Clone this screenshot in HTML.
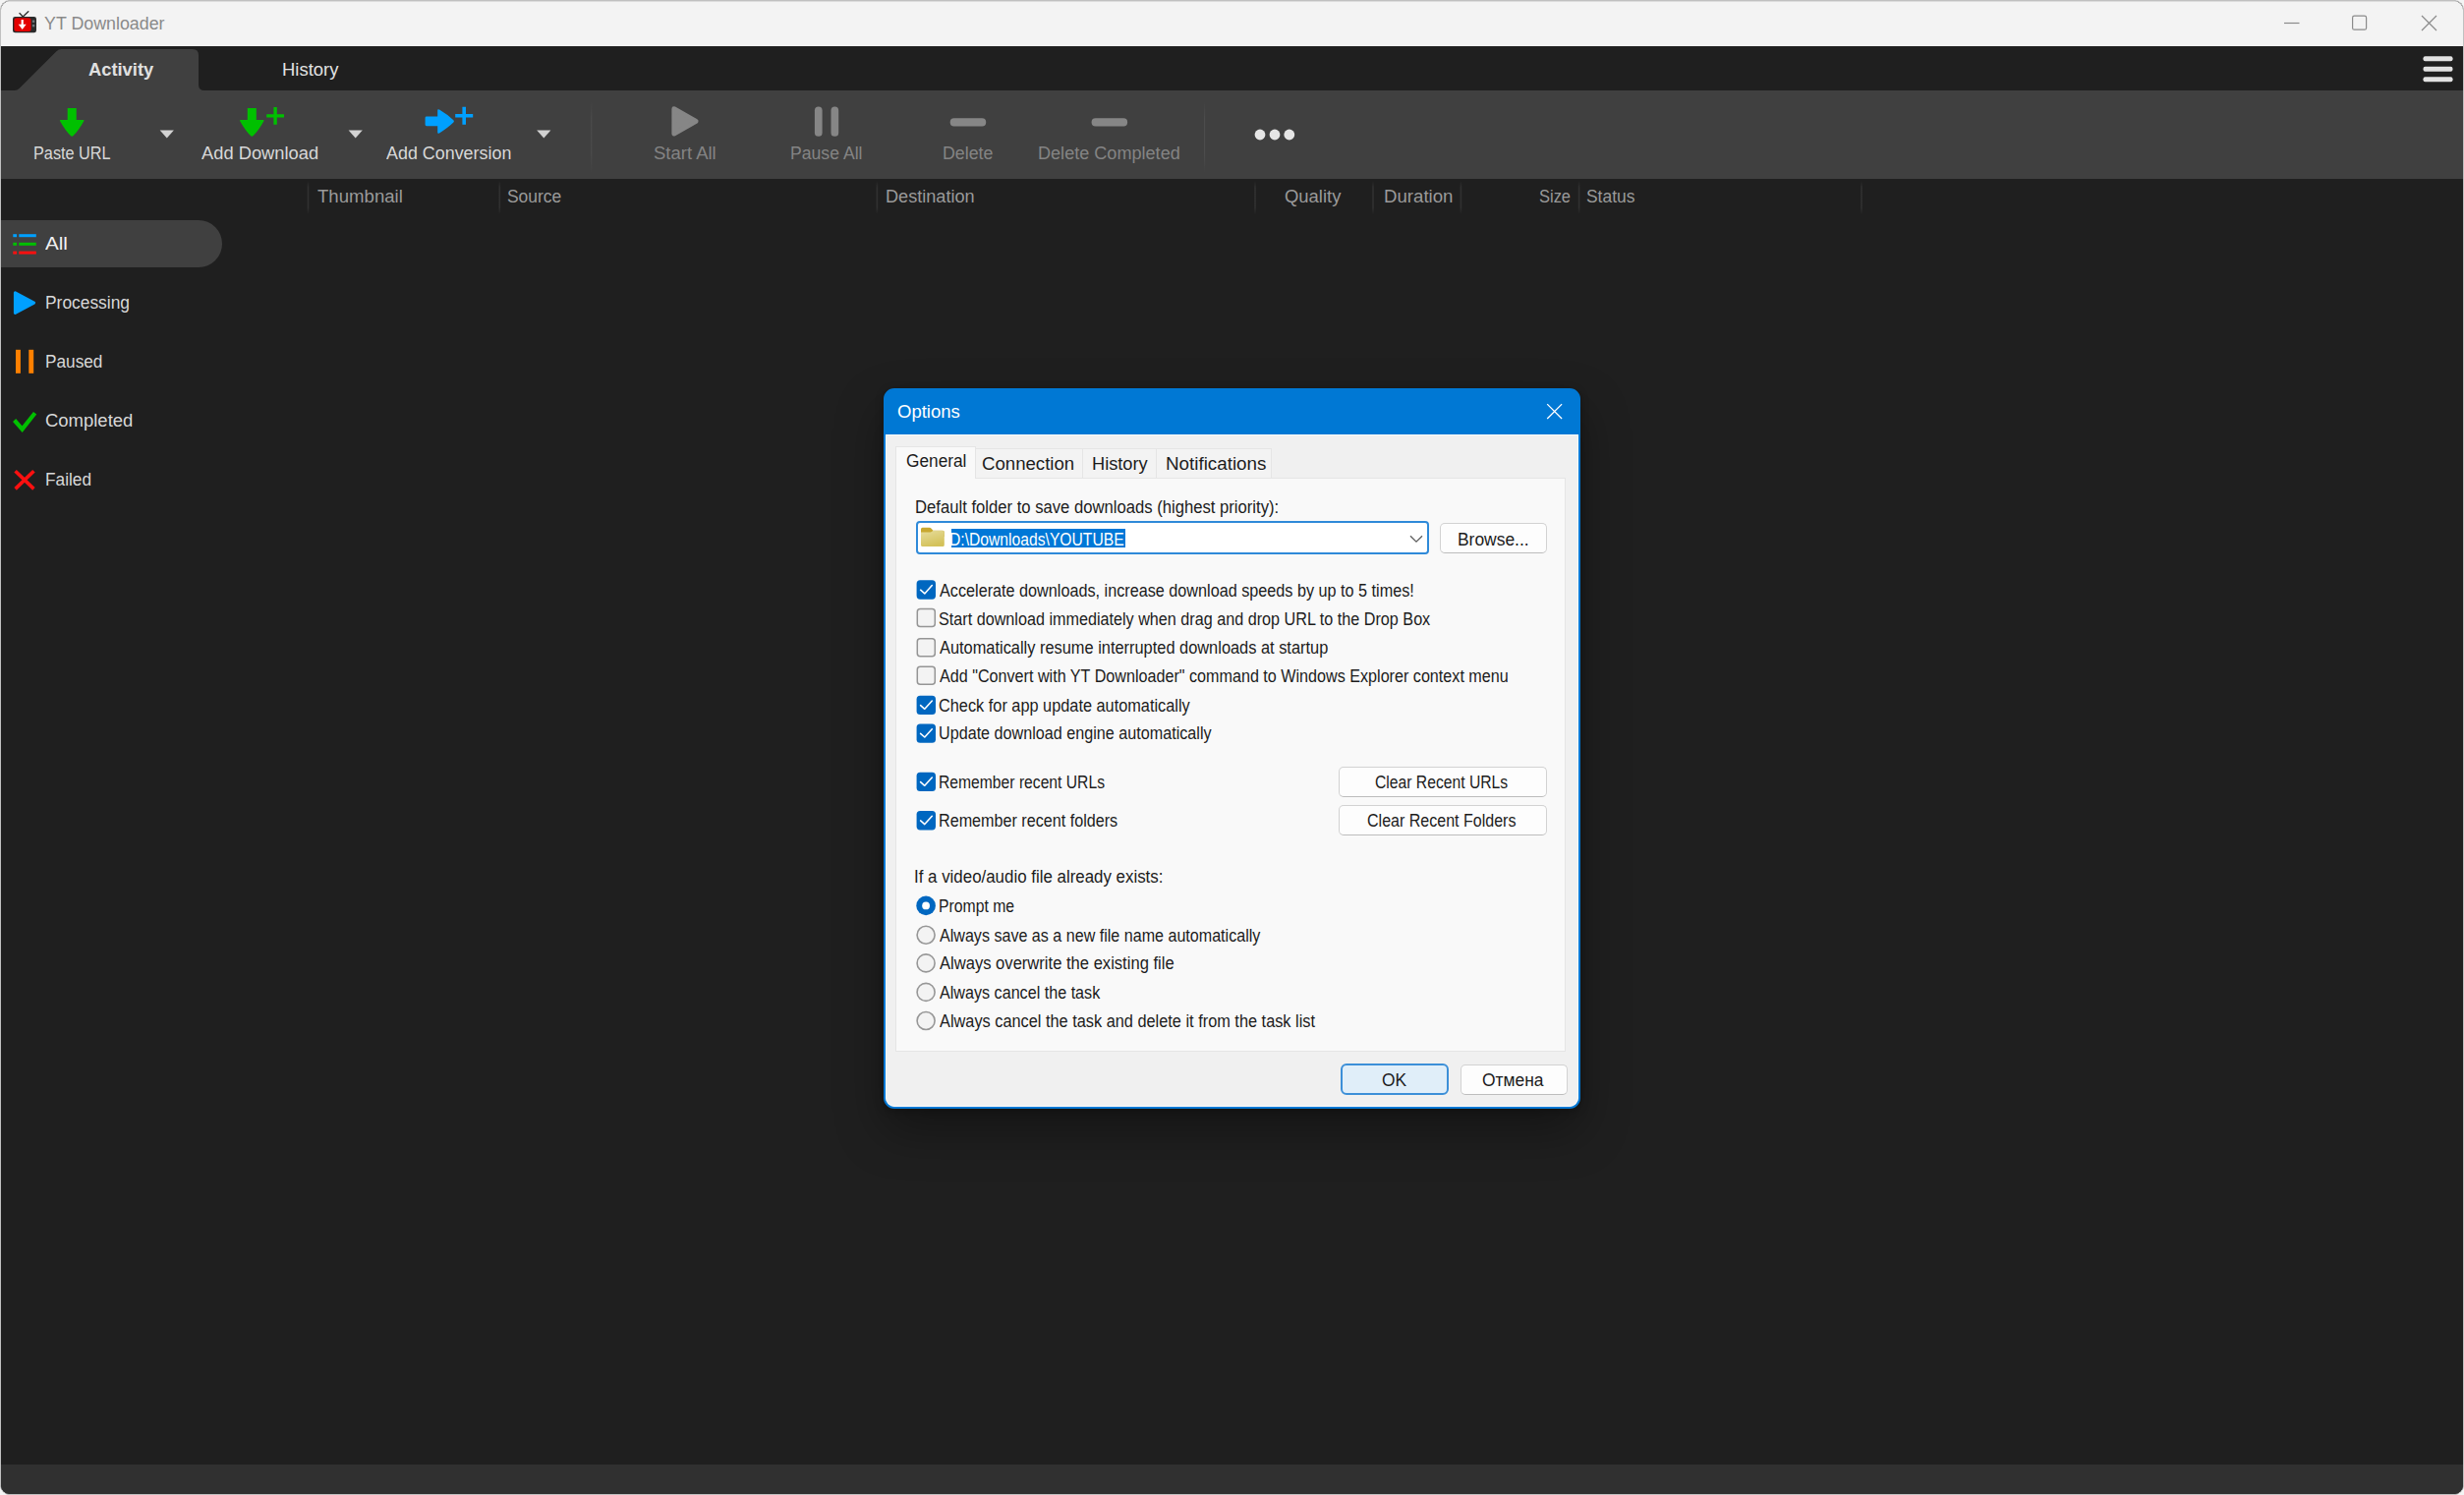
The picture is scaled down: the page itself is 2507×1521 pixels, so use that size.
<!DOCTYPE html><html><head><meta charset="utf-8"><title>YT Downloader</title><style>
html,body{margin:0;padding:0}
body{width:2507px;height:1521px;background:#f4f4f4;overflow:hidden;position:relative;font-family:"Liberation Sans",sans-serif}
.abs{position:absolute}
.t{position:absolute;white-space:pre;line-height:1;transform-origin:0 0}
#win{position:absolute;left:0;top:0;width:2505px;height:1518.6px;border:1px solid #c0c0c0;border-radius:10px;background:#1f1f1f;overflow:hidden}
#titlebar{position:absolute;left:0;top:0;width:2505px;height:46px;background:#f3f3f3;border-top:1px solid #dcdcdc;box-sizing:border-box}
#toolbar{position:absolute;left:0;top:91px;width:2505px;height:90px;background:#404040}
#status{position:absolute;left:0;top:1489px;width:2505px;height:30px;background:#303030}
#allpill{position:absolute;left:0;top:223px;width:225px;height:48px;border-radius:0 24px 24px 0;background:#404040}
#dlg{position:absolute;left:899px;top:395px;width:705px;height:729px;border:2px solid #0078d4;border-radius:11px;background:linear-gradient(#0078d4 0,#0078d4 45.4px,#f0f0f0 45.4px);box-shadow:0 22px 48px rgba(0,0,0,.34),0 2px 8px rgba(0,0,0,.25);overflow:hidden;box-sizing:content-box}
.btn{position:absolute;box-sizing:border-box;background:#fdfdfd;border:1px solid #d2d2d2;border-bottom-color:#bdbdbd;border-radius:5px}
.cb{position:absolute;box-sizing:border-box;width:19.5px;height:19.5px;border-radius:3.5px}
.cb.on{background:#0067c0}
.cb.off{background:#f3f3f3;border:1.4px solid #999999}
.rb{position:absolute;box-sizing:border-box;width:19.6px;height:19.6px;border-radius:50%}
.rb.off{background:#f3f3f3;border:1.4px solid #999999}
.rb.on{background:#ffffff;border:6.2px solid #0067c0}
</style></head><body>
<div id="win"><div id="titlebar"></div><div id="toolbar"></div><div id="status"></div><div id="allpill"></div></div>
<svg class="abs" style="left:0;top:0" width="2507" height="1521" viewBox="0 0 2507 1521"><path d="M1 92 L15 92 Q17.6 92 19.6 90 L57.4 52.2 Q59.6 50 62.6 50 L196 50 Q202 50 202 56 L202 86 Q202 92 208 92 Z" fill="#404040"/><g><path d="M20 13.6 L23.3 17 L28.8 11.7" fill="none" stroke="#333333" stroke-width="1.4" stroke-linecap="round" stroke-linejoin="round"/><rect x="13" y="16.9" width="24" height="16.4" rx="2.4" fill="#2b2b2b"/><rect x="14.4" y="18.2" width="17.2" height="13.7" rx="2.5" fill="#e40000"/><path d="M21.6 20 h2.2 v4.8 h2.9 l-4 5.1 l-4 -5.1 h2.9 z" fill="#ffffff"/><rect x="32.9" y="20.5" width="2.4" height="2.4" fill="#70787a"/><rect x="32.9" y="24.9" width="2.4" height="2.4" fill="#70787a"/></g><g stroke="#8a8a8a" stroke-width="1.2" fill="none"><path d="M2324 23.5 H2339.5"/><rect x="2393.6" y="16.2" width="14" height="14" rx="1.8"/><path d="M2464 16 L2479 31 M2479 16 L2464 31"/></g><g fill="#e2e2e2"><rect x="2465.5" y="57.3" width="30" height="5" rx="2"/><rect x="2465.5" y="67.8" width="30" height="5" rx="2"/><rect x="2465.5" y="78.3" width="30" height="5" rx="2"/></g><path d="M68.7 110 h9 v12 h7 q1.4 0 .6 1.2 Q79.4 133.5 74.6 138 q-1.4 1.5 -2.8 0 Q67.0 133.5 61.1 123.2 q-.8 -1.2 .6 -1.2 h7 z" fill="#00c000"/><path d="M251.8 110 h9 v12 h7 q1.4 0 .6 1.2 Q262.5 133.5 257.7 138 q-1.4 1.5 -2.8 0 Q250.1 133.5 244.2 123.2 q-.8 -1.2 .6 -1.2 h7 z" fill="#00c000"/><path d="M271.2 116.2 h17.8 v3.4 h-17.8 z M278.4 109 h3.4 v17.8 h-3.4 z" fill="#00c000"/><path d="M434 118.6 H445.2 V112.6 Q445.2 110.4 447 111.6 Q456 117 461.4 122.3 Q462.5 123.4 461.4 124.5 Q456 129.8 447 135.4 Q445.2 136.6 445.2 134.4 V128.2 H434 Q432.6 128.2 432.6 126.8 V120 Q432.6 118.6 434 118.6 Z" fill="#00a0ff"/><path d="M463.2 115.9 h18 v3.6 h-18 z M470.4 108.7 h3.6 v18 h-3.6 z" fill="#00a0ff"/><path d="M162.7 132.6 h14.2 l-7.1 7.8 z" fill="#d2d2d2"/><path d="M354.6 132.6 h14.2 l-7.1 7.8 z" fill="#d2d2d2"/><path d="M546.2 132.6 h14.2 l-7.1 7.8 z" fill="#d2d2d2"/><defs><linearGradient id="sg" x1="0" y1="0" x2="0" y2="1"><stop offset="0" stop-color="#4c4c4c" stop-opacity="0"/><stop offset="0.25" stop-color="#4c4c4c" stop-opacity="1"/><stop offset="0.75" stop-color="#4c4c4c" stop-opacity="1"/><stop offset="1" stop-color="#4c4c4c" stop-opacity="0"/></linearGradient><linearGradient id="hg" x1="0" y1="0" x2="0" y2="1"><stop offset="0" stop-color="#303030" stop-opacity="0"/><stop offset="0.2" stop-color="#303030" stop-opacity="1"/><stop offset="0.8" stop-color="#303030" stop-opacity="1"/><stop offset="1" stop-color="#303030" stop-opacity="0"/></linearGradient></defs><rect x="601.2" y="103" width="1.1" height="72" fill="url(#sg)"/><rect x="1225" y="103" width="1.1" height="72" fill="url(#sg)"/><polygon points="685.8,110.7 708.2,123.4 685.8,136.1" fill="#868686" stroke="#868686" stroke-width="4.8" stroke-linejoin="round"/><rect x="828.9" y="108.6" width="7.7" height="30.2" rx="3.85" fill="#868686"/><rect x="845.5" y="108.6" width="7.7" height="30.2" rx="3.85" fill="#868686"/><rect x="966.7" y="120.2" width="36.5" height="8.2" rx="4" fill="#868686"/><rect x="1110.6" y="120.2" width="36.5" height="8.2" rx="4" fill="#868686"/><circle cx="1282.0" cy="137" r="5.4" fill="#e6e6e6"/><circle cx="1297.0" cy="137" r="5.4" fill="#e6e6e6"/><circle cx="1311.8" cy="137" r="5.4" fill="#e6e6e6"/><rect x="312.7" y="184" width="1.6" height="34" fill="url(#hg)"/><rect x="507.5" y="184" width="1.6" height="34" fill="url(#hg)"/><rect x="891.6" y="184" width="1.6" height="34" fill="url(#hg)"/><rect x="1276.2" y="184" width="1.6" height="34" fill="url(#hg)"/><rect x="1396.2" y="184" width="1.6" height="34" fill="url(#hg)"/><rect x="1485.6" y="184" width="1.6" height="34" fill="url(#hg)"/><rect x="1605.8" y="184" width="1.6" height="34" fill="url(#hg)"/><rect x="1893.2" y="184" width="1.6" height="34" fill="url(#hg)"/><g><rect x="13.3" y="238.2" width="3.8" height="3" fill="#00a0ff"/><rect x="19.3" y="238.2" width="17.5" height="3" fill="#00a0ff"/><rect x="13.3" y="246.8" width="3.8" height="3" fill="#00c000"/><rect x="19.3" y="246.8" width="17.5" height="3" fill="#00c000"/><rect x="13.3" y="255.6" width="3.8" height="3" fill="#ff1010"/><rect x="19.3" y="255.6" width="17.5" height="3" fill="#ff1010"/></g><polygon points="15.4,297.8 34.6,308.1 15.4,318.4" fill="#00a0ff" stroke="#00a0ff" stroke-width="3" stroke-linejoin="round"/><rect x="16" y="355.8" width="4.9" height="24" fill="#ff8000"/><rect x="29.3" y="355.8" width="4.9" height="24" fill="#ff8000"/><path d="M14.6 427.5 L22.6 436.6 L35.6 420.2" fill="none" stroke="#00c000" stroke-width="4.2" stroke-linejoin="miter"/><path d="M15.6 479.2 L34.4 497.4 M34.4 479.2 L15.6 497.4" fill="none" stroke="#ff1010" stroke-width="3.6"/></svg>
<div id="dlg"><div style="position:absolute;left:0;top:45px;right:0;bottom:0;border:1px solid #fbfbfb;border-radius:0 0 9px 9px;box-sizing:border-box"></div></div><div class="abs" style="left:911.0px;top:486.0px;width:682.0px;height:583.5px;box-sizing:border-box;background:#f9f9f9;border:1px solid #e5e5e5"></div><div class="abs" style="left:992.6px;top:456.0px;width:109.4px;height:31.0px;box-sizing:border-box;background:#f3f3f3;border:1px solid #e5e5e5;border-left:none"></div><div class="abs" style="left:1102.0px;top:456.0px;width:75.0px;height:31.0px;box-sizing:border-box;background:#f3f3f3;border:1px solid #e5e5e5;border-left:none"></div><div class="abs" style="left:1177.0px;top:456.0px;width:116.6px;height:31.0px;box-sizing:border-box;background:#f3f3f3;border:1px solid #e5e5e5;border-left:none"></div><div class="abs" style="left:911.0px;top:453.6px;width:81.8px;height:33.9px;box-sizing:border-box;background:#f9f9f9;border:1px solid #e5e5e5;border-bottom:none"></div><div class="abs" style="left:932.2px;top:530.4px;width:522.1px;height:33.2px;box-sizing:border-box;background:#ffffff;border:2px solid #2f8ad9;border-radius:4px"></div><div class="abs" style="left:968.2px;top:538.2px;width:177.3px;height:19.0px;box-sizing:border-box;background:#0078d7"></div><div class="btn" style="left:1465.2px;top:532.2px;width:108.6px;height:31px"></div><div class="btn" style="left:1362px;top:780.3px;width:212px;height:30.4px"></div><div class="btn" style="left:1362px;top:819.4px;width:212px;height:30.4px"></div><div class="btn" style="left:1364px;top:1082px;width:110px;height:32px;background:#e0eef9;border:2px solid #3c8fd8;border-radius:6px"></div><div class="btn" style="left:1486.4px;top:1082.6px;width:108.6px;height:31.2px"></div><svg class="abs" style="left:0;top:0" width="2507" height="1521" viewBox="0 0 2507 1521"><path d="M1574.2 411.1 L1589.1 426 M1589.1 411.1 L1574.2 426" stroke="#ffffff" stroke-width="1.3" fill="none"/><defs><linearGradient id="fg" x1="0" y1="0" x2="0.4" y2="1"><stop offset="0" stop-color="#e6dc9c"/><stop offset="1" stop-color="#d4c25a"/></linearGradient></defs><path d="M937 538.4 Q937 536.8 938.6 536.8 L945.6 536.8 Q946.8 536.8 947.6 537.8 L949.4 539.8 L959.2 539.8 Q960.8 539.8 960.8 541.4 L960.8 546 L937 546 Z" fill="#c8a830"/><path d="M937 541.6 L946.4 541.6 Q947.4 541.6 948.2 540.8 L949.2 539.9 L959.2 539.9 Q960.8 539.9 960.8 541.5 L960.8 554.4 Q960.8 556 959.2 556 L938.6 556 Q937 556 937 554.4 Z" fill="url(#fg)"/><path d="M1435 545.2 L1441 551.2 L1447 545.2" stroke="#5e5e5e" stroke-width="1.3" fill="none"/><rect x="932.6" y="590.3" width="19.4" height="19.4" rx="3.6" fill="#0067c0"/><rect x="933.3" y="619.6" width="18" height="18" rx="3" fill="#f3f3f3" stroke="#959595" stroke-width="1.5"/><rect x="933.3" y="649.7" width="18" height="18" rx="3" fill="#f3f3f3" stroke="#959595" stroke-width="1.5"/><rect x="933.3" y="678.2" width="18" height="18" rx="3" fill="#f3f3f3" stroke="#959595" stroke-width="1.5"/><rect x="932.6" y="707.7" width="19.4" height="19.4" rx="3.6" fill="#0067c0"/><rect x="932.6" y="736.4" width="19.4" height="19.4" rx="3.6" fill="#0067c0"/><rect x="932.6" y="785.7" width="19.4" height="19.4" rx="3.6" fill="#0067c0"/><rect x="932.6" y="825.0" width="19.4" height="19.4" rx="3.6" fill="#0067c0"/><circle cx="942.1" cy="921.4" r="9.8" fill="#0067c0"/><circle cx="942.1" cy="921.4" r="3.9" fill="#ffffff"/><circle cx="942.1" cy="951.2" r="9" fill="#f3f3f3" stroke="#979797" stroke-width="1.6"/><circle cx="942.1" cy="979.9" r="9" fill="#f3f3f3" stroke="#979797" stroke-width="1.6"/><circle cx="942.1" cy="1009.4" r="9" fill="#f3f3f3" stroke="#979797" stroke-width="1.6"/><circle cx="942.1" cy="1038.5" r="9" fill="#f3f3f3" stroke="#979797" stroke-width="1.6"/><path d="M936.6 600.2 L940.8 603.9 L948.3 595.6" stroke="#ffffff" stroke-width="1.55" fill="none" stroke-linecap="round" stroke-linejoin="round"/><path d="M936.6 717.6 L940.8 721.3 L948.3 713.0" stroke="#ffffff" stroke-width="1.55" fill="none" stroke-linecap="round" stroke-linejoin="round"/><path d="M936.6 746.3 L940.8 750.0 L948.3 741.7" stroke="#ffffff" stroke-width="1.55" fill="none" stroke-linecap="round" stroke-linejoin="round"/><path d="M936.6 795.6 L940.8 799.3 L948.3 791.0" stroke="#ffffff" stroke-width="1.55" fill="none" stroke-linecap="round" stroke-linejoin="round"/><path d="M936.6 834.9 L940.8 838.6 L948.3 830.3" stroke="#ffffff" stroke-width="1.55" fill="none" stroke-linecap="round" stroke-linejoin="round"/></svg>
<div class="t" style="left:45.18px;top:15.55px;font-size:17.5px;color:#8a8a8a;transform:scaleX(1.0185)">YT Downloader</div><div class="t" style="left:89.75px;top:62.55px;font-size:17.5px;font-weight:700;color:#e0e0e0;transform:scaleX(1.0468)">Activity</div><div class="t" style="left:286.75px;top:62.55px;font-size:17.5px;color:#e2e2e2;transform:scaleX(1.0537)">History</div><div class="t" style="left:33.97px;top:147.55px;font-size:17.5px;color:#d8d8d8;transform:scaleX(0.9289)">Paste URL</div><div class="t" style="left:205.20px;top:147.55px;font-size:17.5px;color:#d8d8d8;transform:scaleX(1.0460)">Add Download</div><div class="t" style="left:392.70px;top:147.55px;font-size:17.5px;color:#d8d8d8;transform:scaleX(1.0226)">Add Conversion</div><div class="t" style="left:664.64px;top:147.55px;font-size:17.5px;color:#848484;transform:scaleX(1.0569)">Start All</div><div class="t" style="left:804.49px;top:147.55px;font-size:17.5px;color:#848484;transform:scaleX(1.0070)">Pause All</div><div class="t" style="left:958.58px;top:147.55px;font-size:17.5px;color:#848484;transform:scaleX(1.0163)">Delete</div><div class="t" style="left:1055.97px;top:147.55px;font-size:17.5px;color:#848484;transform:scaleX(1.0333)">Delete Completed</div><div class="t" style="left:322.90px;top:191.55px;font-size:17.5px;color:#9a9a9a;transform:scaleX(1.0630)">Thumbnail</div><div class="t" style="left:515.90px;top:191.55px;font-size:17.5px;color:#9a9a9a;transform:scaleX(1.0000)">Source</div><div class="t" style="left:900.57px;top:191.55px;font-size:17.5px;color:#9a9a9a;transform:scaleX(1.0349)">Destination</div><div class="t" style="left:1306.65px;top:191.55px;font-size:17.5px;color:#9a9a9a;transform:scaleX(1.0537)">Quality</div><div class="t" style="left:1407.53px;top:191.55px;font-size:17.5px;color:#9a9a9a;transform:scaleX(1.0656)">Duration</div><div class="t" style="left:1566.46px;top:191.55px;font-size:17.5px;color:#9a9a9a;transform:scaleX(0.9406)">Size</div><div class="t" style="left:1614.00px;top:191.55px;font-size:17.5px;color:#9a9a9a;transform:scaleX(0.9958)">Status</div><div class="t" style="left:46.20px;top:239.55px;font-size:17.5px;color:#f2f2f2;transform:scaleX(1.1778)">All</div><div class="t" style="left:45.91px;top:299.55px;font-size:17.5px;color:#d8d8d8;transform:scaleX(0.9929)">Processing</div><div class="t" style="left:45.92px;top:359.55px;font-size:17.5px;color:#d8d8d8;transform:scaleX(0.9842)">Paused</div><div class="t" style="left:45.84px;top:419.55px;font-size:17.5px;color:#d8d8d8;transform:scaleX(1.0554)">Completed</div><div class="t" style="left:45.91px;top:479.55px;font-size:17.5px;color:#d8d8d8;transform:scaleX(0.9870)">Failed</div><div class="t" style="left:913.04px;top:410.55px;font-size:17.5px;color:#ffffff;transform:scaleX(1.0576)">Options</div><div class="t" style="left:921.61px;top:460.55px;font-size:17.5px;color:#1c1c1c;transform:scaleX(0.9867)">General</div><div class="t" style="left:999.24px;top:463.55px;font-size:17.5px;color:#1c1c1c;transform:scaleX(1.0632)">Connection</div><div class="t" style="left:1110.76px;top:463.55px;font-size:17.5px;color:#1c1c1c;transform:scaleX(1.0407)">History</div><div class="t" style="left:1185.93px;top:463.55px;font-size:17.5px;color:#1c1c1c;transform:scaleX(1.0745)">Notifications</div><div class="t" style="left:930.85px;top:507.55px;font-size:17.5px;color:#1c1c1c;transform:scaleX(0.9514)">Default folder to save downloads (highest priority):</div><div class="t" style="left:966.30px;top:540.55px;font-size:17.5px;color:#ffffff;transform:scaleX(0.8954)">D:\Downloads\YOUTUBE</div><div class="t" style="left:1482.60px;top:540.55px;font-size:17.5px;color:#1c1c1c;transform:scaleX(0.9957)">Browse...</div><div class="t" style="left:956.20px;top:592.55px;font-size:17.5px;color:#1c1c1c;transform:scaleX(0.9260)">Accelerate downloads, increase download speeds by up to 5 times!</div><div class="t" style="left:955.28px;top:621.55px;font-size:17.5px;color:#1c1c1c;transform:scaleX(0.9243)">Start download immediately when drag and drop URL to the Drop Box</div><div class="t" style="left:956.20px;top:650.55px;font-size:17.5px;color:#1c1c1c;transform:scaleX(0.9363)">Automatically resume interrupted downloads at startup</div><div class="t" style="left:956.20px;top:679.55px;font-size:17.5px;color:#1c1c1c;transform:scaleX(0.9223)">Add "Convert with YT Downloader" command to Windows Explorer context menu</div><div class="t" style="left:955.27px;top:709.55px;font-size:17.5px;color:#1c1c1c;transform:scaleX(0.9322)">Check for app update automatically</div><div class="t" style="left:955.28px;top:737.55px;font-size:17.5px;color:#1c1c1c;transform:scaleX(0.9233)">Update download engine automatically</div><div class="t" style="left:955.30px;top:787.55px;font-size:17.5px;color:#1c1c1c;transform:scaleX(0.8957)">Remember recent URLs</div><div class="t" style="left:955.28px;top:826.55px;font-size:17.5px;color:#1c1c1c;transform:scaleX(0.9224)">Remember recent folders</div><div class="t" style="left:1398.80px;top:787.55px;font-size:17.5px;color:#1c1c1c;transform:scaleX(0.8966)">Clear Recent URLs</div><div class="t" style="left:1391.08px;top:826.55px;font-size:17.5px;color:#1c1c1c;transform:scaleX(0.9159)">Clear Recent Folders</div><div class="t" style="left:929.87px;top:883.55px;font-size:17.5px;color:#1c1c1c;transform:scaleX(0.9649)">If a video/audio file already exists:</div><div class="t" style="left:955.30px;top:913.55px;font-size:17.5px;color:#1c1c1c;transform:scaleX(0.9000)">Prompt me</div><div class="t" style="left:956.20px;top:943.55px;font-size:17.5px;color:#1c1c1c;transform:scaleX(0.9192)">Always save as a new file name automatically</div><div class="t" style="left:956.20px;top:971.55px;font-size:17.5px;color:#1c1c1c;transform:scaleX(0.9474)">Always overwrite the existing file</div><div class="t" style="left:956.20px;top:1001.55px;font-size:17.5px;color:#1c1c1c;transform:scaleX(0.9220)">Always cancel the task</div><div class="t" style="left:956.20px;top:1030.55px;font-size:17.5px;color:#1c1c1c;transform:scaleX(0.9329)">Always cancel the task and delete it from the task list</div><div class="t" style="left:1405.81px;top:1090.55px;font-size:17.5px;color:#1c1c1c;transform:scaleX(0.9917)">OK</div><div class="t" style="left:1508.20px;top:1090.55px;font-size:17.5px;color:#1c1c1c;transform:scaleX(0.9952)">Отмена</div>
</body></html>
